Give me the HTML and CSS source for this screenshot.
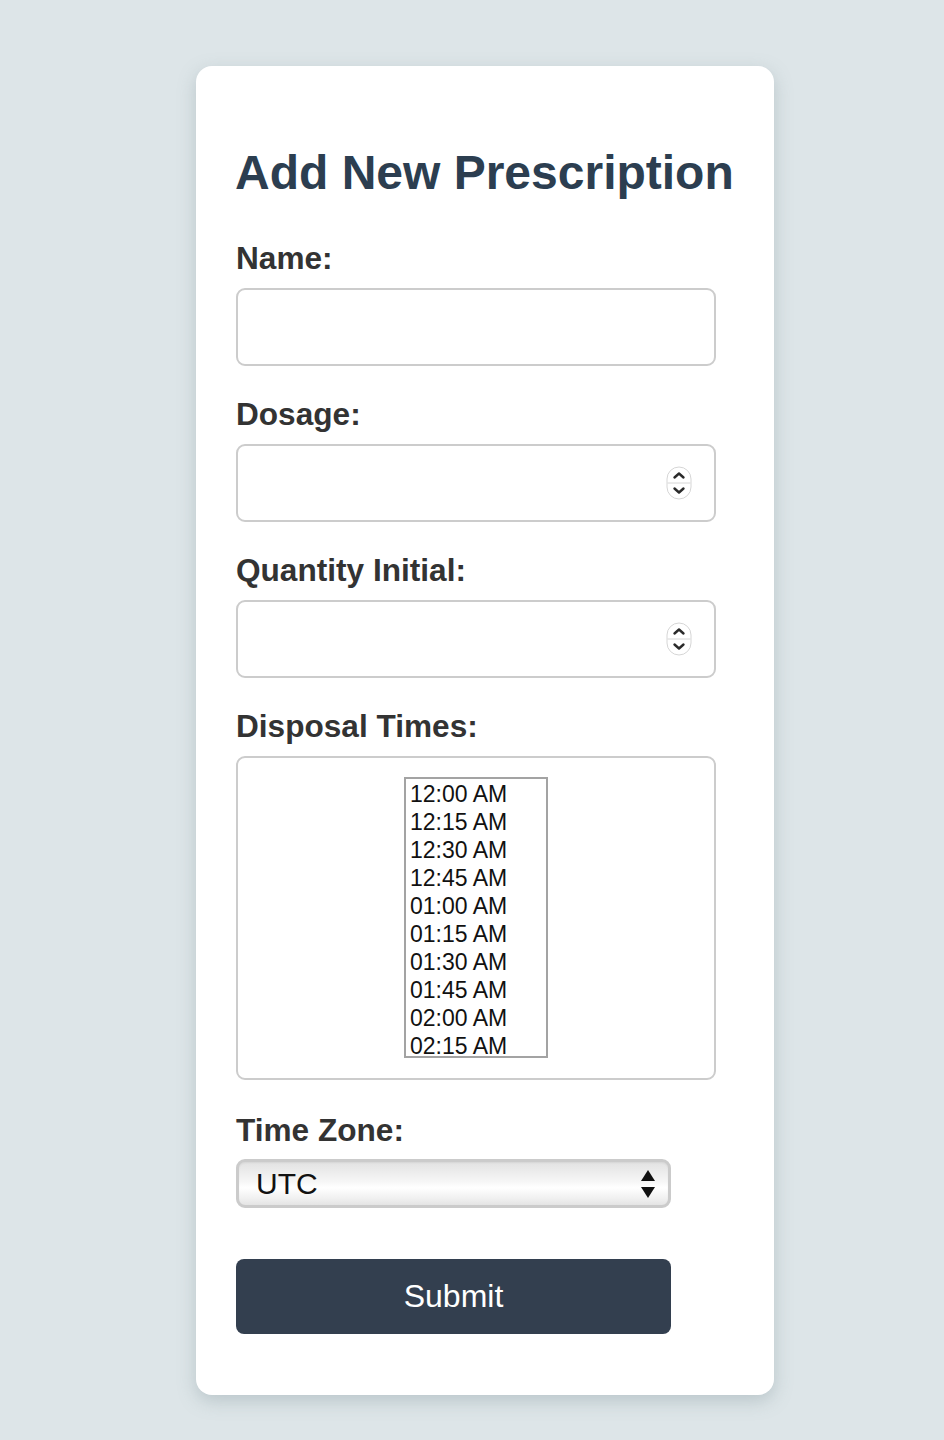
FILE: index.html
```html
<!DOCTYPE html>
<html lang="en">
<head>
<meta charset="utf-8">
<title>Add New Prescription</title>
<link rel="stylesheet" href="styles.css">
</head>
<body>
<main class="card">
  <h2 class="title">Add New Prescription</h2>
  <form class="form">
    <label class="label" for="name">Name:</label>
    <input class="field" id="name" type="text">

    <label class="label" for="dosage">Dosage:</label>
    <div class="num-wrap">
      <input class="field" id="dosage" type="number">
      <svg class="spinner" width="26" height="34" viewBox="0 0 26 34">
        <rect x="1" y="1" width="24" height="32" rx="12" fill="#fff" stroke="#d6d6d6" stroke-width="1"/>
        <line x1="1.5" y1="17" x2="24.5" y2="17" stroke="#d6d6d6" stroke-width="1"/>
        <path d="M8.5 11.5 L13 7.5 L17.5 11.5" fill="none" stroke="#2a2a2a" stroke-width="2.4" stroke-linecap="round" stroke-linejoin="round"/>
        <path d="M8.5 22.5 L13 26.5 L17.5 22.5" fill="none" stroke="#2a2a2a" stroke-width="2.4" stroke-linecap="round" stroke-linejoin="round"/>
      </svg>
    </div>

    <label class="label" for="qty">Quantity Initial:</label>
    <div class="num-wrap">
      <input class="field" id="qty" type="number">
      <svg class="spinner" width="26" height="34" viewBox="0 0 26 34">
        <rect x="1" y="1" width="24" height="32" rx="12" fill="#fff" stroke="#d6d6d6" stroke-width="1"/>
        <line x1="1.5" y1="17" x2="24.5" y2="17" stroke="#d6d6d6" stroke-width="1"/>
        <path d="M8.5 11.5 L13 7.5 L17.5 11.5" fill="none" stroke="#2a2a2a" stroke-width="2.4" stroke-linecap="round" stroke-linejoin="round"/>
        <path d="M8.5 22.5 L13 26.5 L17.5 22.5" fill="none" stroke="#2a2a2a" stroke-width="2.4" stroke-linecap="round" stroke-linejoin="round"/>
      </svg>
    </div>

    <label class="label">Disposal Times:</label>
    <div class="times-box">
      <div class="listbox" role="listbox" aria-multiselectable="true">
        <div class="opt" role="option">12:00 AM</div>
        <div class="opt" role="option">12:15 AM</div>
        <div class="opt" role="option">12:30 AM</div>
        <div class="opt" role="option">12:45 AM</div>
        <div class="opt" role="option">01:00 AM</div>
        <div class="opt" role="option">01:15 AM</div>
        <div class="opt" role="option">01:30 AM</div>
        <div class="opt" role="option">01:45 AM</div>
        <div class="opt" role="option">02:00 AM</div>
        <div class="opt" role="option">02:15 AM</div>
      </div>
    </div>

    <label class="label tz-label" for="tz">Time Zone:</label>
    <div class="select-wrap">
      <select class="select" id="tz">
        <option>UTC</option>
      </select>
      <svg class="select-arrows" width="16" height="30" viewBox="0 0 16 30">
        <path d="M8 1 L15 12 L1 12 Z" fill="#111"/>
        <path d="M8 29 L15 18 L1 18 Z" fill="#111"/>
      </svg>
    </div>

    <button class="submit" type="button">Submit</button>
  </form>
</main>
</body>
</html>
```

FILE: styles.css
```css
html, body {
  margin: 0;
  padding: 0;
}

body {
  background: #dde5e8;
  font-family: "Liberation Sans", Arial, sans-serif;
  padding: 66px 0 46px 196px;
}

.card {
  width: 578px;
  box-sizing: border-box;
  background: #fff;
  border-radius: 16px;
  padding: 79px 40px 61px 40px;
  box-shadow: 0 6px 18px rgba(120, 140, 145, 0.35);
}

.title {
  margin: 0 0 39px -1px;
  font-size: 48px;
  line-height: 56px;
  font-weight: 700;
  color: #2c3e50;
}

.form {
  display: flex;
  flex-direction: column;
  align-items: flex-start;
}

.label {
  display: block;
  font-size: 31.6px;
  line-height: 36px;
  font-weight: 700;
  color: #333;
  margin-bottom: 12px;
}

.field {
  display: block;
  box-sizing: border-box;
  width: 480px;
  height: 78px;
  margin: 0 0 30px 0;
  border: 2px solid #cccccc;
  border-radius: 9px;
  background: #fff;
  font-size: 24px;
  padding: 0 16px;
  outline: none;
  -moz-appearance: textfield;
}

.field::-webkit-outer-spin-button,
.field::-webkit-inner-spin-button {
  -webkit-appearance: none;
  margin: 0;
}

.num-wrap {
  position: relative;
}

.spinner {
  position: absolute;
  left: 430px;
  top: 22px;
}

.times-box {
  box-sizing: border-box;
  width: 480px;
  height: 324px;
  border: 2px solid #cccccc;
  border-radius: 9px;
  display: flex;
  justify-content: center;
  align-items: flex-start;
  padding-top: 19px;
  margin-bottom: 30px;
}

.listbox {
  box-sizing: border-box;
  width: 144px;
  height: 281px;
  border: 2px solid #a3a3a3;
  overflow: hidden;
  padding: 1px 0 0 0;
  font-family: "Liberation Sans", Arial, sans-serif;
}

.opt {
  font-size: 23px;
  line-height: 28px;
  height: 28px;
  padding-left: 4px;
  color: #111;
  white-space: nowrap;
}

.tz-label {
  margin-top: 2px;
  margin-bottom: 11px;
}

.select-wrap {
  position: relative;
  width: 435px;
  height: 49px;
  margin-bottom: 51px;
}

.select {
  -webkit-appearance: none;
  appearance: none;
  box-sizing: border-box;
  width: 435px;
  height: 49px;
  border: 3px solid #cbcbcb;
  border-radius: 9px;
  background: linear-gradient(to bottom, #e2e2e2 0%, #f6f6f6 45%, #ffffff 60%, #f0f0f0 85%, #e4e4e4 100%);
  box-shadow: inset 0 1px 2px rgba(0,0,0,0.06);
  font-family: "Liberation Sans", Arial, sans-serif;
  font-size: 30px;
  color: #111;
  padding: 0 0 0 17px;
  outline: none;
}

.select-arrows {
  position: absolute;
  right: 15px;
  top: 10px;
  pointer-events: none;
}

.submit {
  width: 435px;
  height: 75px;
  border: none;
  border-radius: 8px;
  background: #333f4f;
  color: #fff;
  font-family: "Liberation Sans", Arial, sans-serif;
  font-size: 32px;
  cursor: pointer;
}
```
